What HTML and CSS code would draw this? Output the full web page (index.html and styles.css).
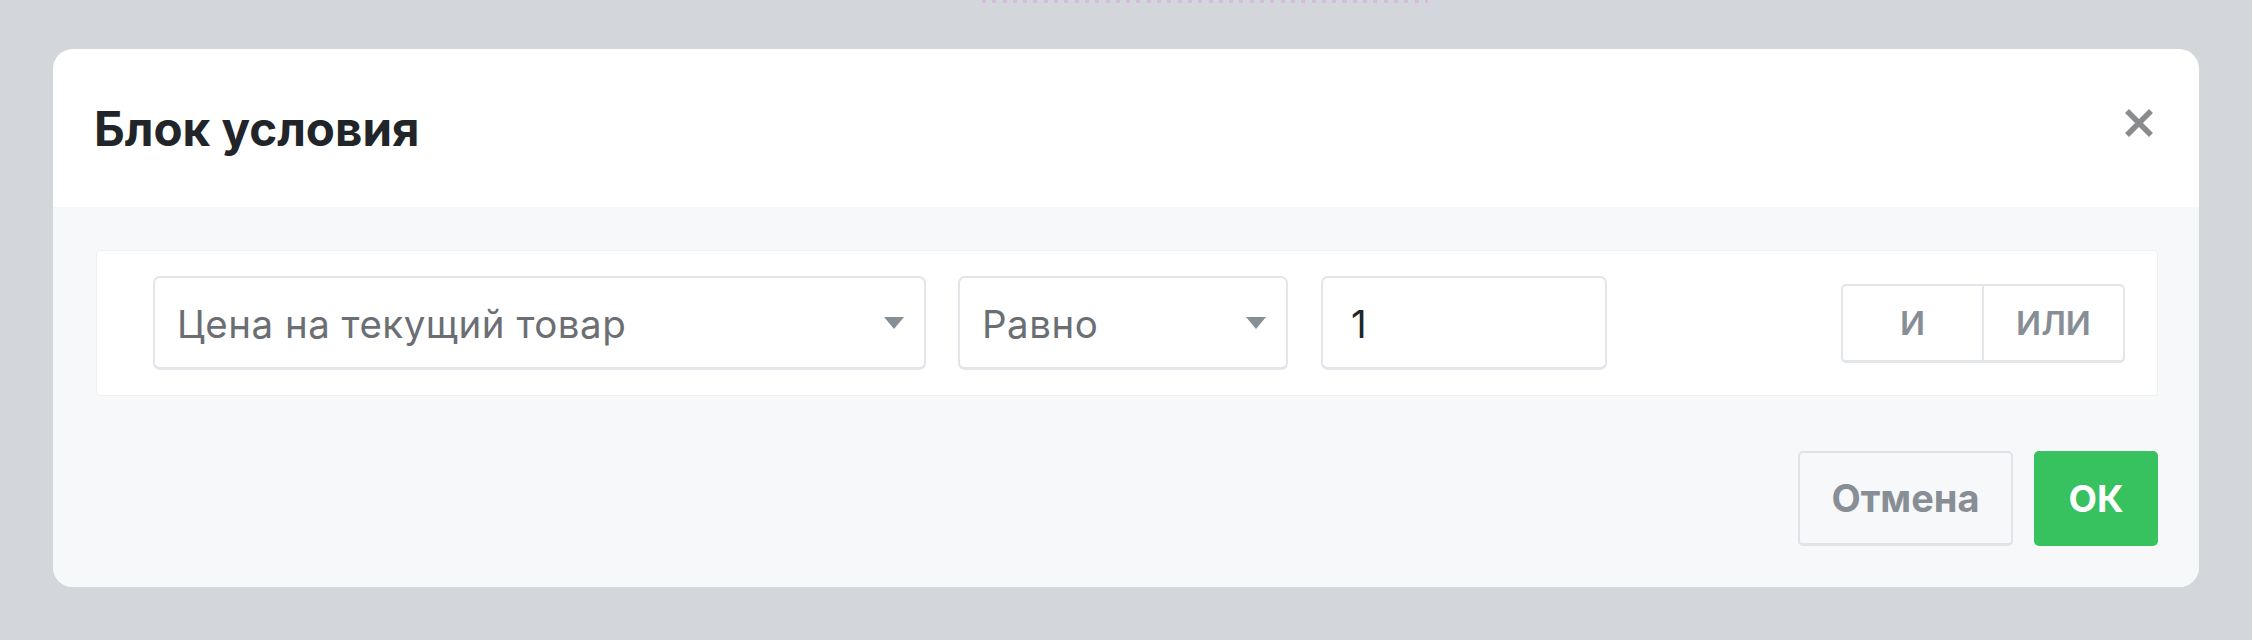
FILE: index.html
```html
<!DOCTYPE html>
<html lang="ru">
<head>
<meta charset="utf-8">
<title>Блок условия</title>
<link rel="stylesheet" href="styles.css">
</head>
<body>
<div class="topline"></div>
<div class="modal">
  <div class="modal-header">
    <h1 class="modal-title">Блок условия</h1>
    <button class="close" aria-label="Закрыть">
      <svg width="30" height="28" viewBox="0 0 30 28"><path d="M3 2 L27 26 M27 2 L3 26" stroke="#8a8b8d" stroke-width="5.5" stroke-linecap="butt" fill="none"/></svg>
    </button>
  </div>
  <div class="modal-body">
    <div class="card">
      <div class="select select-field">
        <span class="select-text">Цена на текущий товар</span>
        <span class="caret"></span>
      </div>
      <div class="select select-op">
        <span class="select-text">Равно</span>
        <span class="caret"></span>
      </div>
      <div class="input">1</div>
      <div class="logic">
        <div class="logic-btn">И</div>
        <div class="logic-btn">ИЛИ</div>
      </div>
    </div>
    <div class="footer">
      <button class="btn btn-cancel">Отмена</button>
      <button class="btn btn-ok">ОК</button>
    </div>
  </div>
</div>
</body>
</html>
```
FILE: styles.css
```css
html, body {
  margin: 0;
  padding: 0;
}
body {
  width: 2252px;
  height: 640px;
  overflow: hidden;
  background: #d3d6db;
  font-family: Inter, "Noto Sans", "Liberation Sans", sans-serif;
}
.topline {
  margin-left: 982px;
  width: 446px;
  height: 3px;
  background-image: repeating-linear-gradient(90deg, #d5bcdc 0 4px, transparent 4px 10.3px);
}
.modal {
  margin: 46px 0 0 53px;
  width: 2146px;
  border-radius: 20px;
  overflow: hidden;
  background: #fff;
}
.modal-header {
  height: 158px;
  display: flex;
  align-items: center;
  justify-content: space-between;
  padding: 0 45px 0 41px;
  box-sizing: border-box;
}
.modal-title {
  margin: 0;
  font-size: 47.5px;
  font-weight: 700;
  color: #212529;
  letter-spacing: 0;
}
.close {
  border: 0;
  background: none;
  padding: 0;
  width: 30px;
  height: 28px;
  display: flex;
  margin-top: -10px;
}
.modal-body {
  background: #f7f8fa;
  padding: 43px 41px 41px 43px;
}
.card {
  background: #fff;
  border: 1px solid #eef0f2;
  border-radius: 4px;
  padding: 25px 32px 25px 56px;
  display: flex;
  align-items: center;
}
.select, .input {
  height: 94px;
  box-sizing: border-box;
  border: 2px solid #e2e5e9;
  border-bottom-width: 3px;
  border-radius: 7px;
  background: #fff;
  display: flex;
  align-items: center;
  font-size: 38.5px;
  letter-spacing: 0.5px;
  padding-top: 3px;
}
.select {
  justify-content: space-between;
  padding-left: 22px;
  padding-right: 20px;
  color: #6b6f74;
}
.select-field {
  width: 773px;
}
.select-op {
  width: 330px;
  margin-left: 32px;
}
.caret {
  width: 0;
  height: 0;
  margin-top: -3px;
  border-left: 10.5px solid transparent;
  border-right: 10.5px solid transparent;
  border-top: 12px solid #868e96;
}
.input {
  width: 286px;
  margin-left: 33px;
  padding-left: 28px;
  padding-right: 24px;
  color: #212529;
}
.logic {
  margin-left: auto;
  display: flex;
  height: 79px;
  box-sizing: border-box;
  border: 2px solid #e2e5e9;
  border-bottom-width: 3px;
  border-radius: 5px;
}
.logic-btn {
  width: 139px;
  display: flex;
  align-items: center;
  justify-content: center;
  font-size: 33px;
  font-weight: 600;
  color: #878e95;
}
.logic-btn + .logic-btn {
  border-left: 2px solid #e2e5e9;
}
.footer {
  display: flex;
  justify-content: flex-end;
  gap: 21px;
  margin-top: 55px;
}
.btn {
  height: 95px;
  box-sizing: border-box;
  font-family: inherit;
  font-size: 38px;
  font-weight: 700;
  border-radius: 5px;
  cursor: pointer;
}
.btn-cancel {
  width: 215px;
  background: #f7f8fa;
  border: 2px solid #dfe2e6;
  border-bottom-width: 3px;
  color: #878e96;
}
.btn-ok {
  width: 124px;
  background: #37c15f;
  border: 0;
  color: #fff;
  font-size: 37px;
}
```
